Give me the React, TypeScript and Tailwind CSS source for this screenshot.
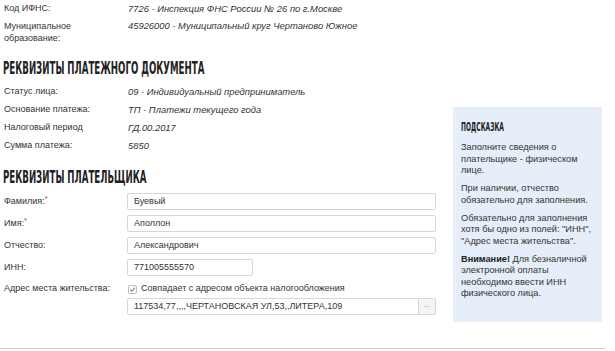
import React from 'react';

const head = "inline-block origin-left whitespace-nowrap font-['DejaVu_Sans_Condensed','DejaVu_Sans',sans-serif] font-bold uppercase text-[#222]";

const InfoRow: React.FC<{ label: React.ReactNode; value: string; className?: string }> = ({ label, value, className }) => (
  <div className={`flex ${className ?? 'h-[18px] items-center'}`}>
    <div className="w-[124px] shrink-0">{label}</div>
    <div className="italic whitespace-nowrap text-[9.4px]">{value}</div>
  </div>
);

const Field: React.FC<{ label: React.ReactNode; value: string; short?: boolean }> = ({ label, value, short }) => (
  <div className="flex items-center h-[17px] mb-[5px]">
    <div className="w-[123px] shrink-0">{label}</div>
    <div
      className={`h-[17px] ${short ? 'w-[126px]' : 'w-[309px]'} border border-[#d6d6d6] rounded-[2px] px-[6px] flex items-center text-[#333]`}
    >
      {value}
    </div>
  </div>
);

const Req: React.FC<{ children: string }> = ({ children }) => (
  <span>
    {children}:<span className="text-[#e03030] align-top text-[8px] leading-none">*</span>
  </span>
);

export default function App() {
  return (
    <div className="w-[615px] h-[351px] bg-white overflow-hidden font-['Liberation_Sans',Arial,sans-serif] text-[9px] text-[#333]">
      <div className="flex h-[348px]">
        <div className="w-[448px] shrink-0 pl-[4px]">
          <InfoRow label="Код ИФНС:" value="7726 - Инспекция ФНС России № 26 по г.Москве" />
          <InfoRow
            className="mt-[2px] leading-[12px] items-start"
            label={<>Муниципальное<br />образование:</>}
            value="45926000 - Муниципальный круг Чертаново Южное"
          />

          <h2 className="h-[20px] mt-[14px] -ml-[1px]">
            <span className={`${head} text-[17px] leading-[20px] scale-x-[0.565]`}>Реквизиты платежного документа</span>
          </h2>

          <div className="mt-[5px]">
            <InfoRow label="Статус лица:" value="09 - Индивидуальный предприниматель" />
            <InfoRow label="Основание платежа:" value="ТП - Платежи текущего года" />
            <InfoRow label="Налоговый период" value="ГД.00.2017" />
            <InfoRow label="Сумма платежа:" value="5850" />
          </div>

          <h2 className="h-[20px] mt-[12px] -ml-[1px]">
            <span className={`${head} text-[17px] leading-[20px] scale-x-[0.565]`}>Реквизиты плательщика</span>
          </h2>

          <div className="mt-[6px]">
            <Field label={<Req>Фамилия</Req>} value="Буевый" />
            <Field label={<Req>Имя</Req>} value="Аполлон" />
            <Field label="Отчество:" value="Александрович" />
            <Field label="ИНН:" value="771005555570" short />
            <div className="flex items-center h-[16px]">
              <div className="w-[124px] shrink-0 whitespace-nowrap">Адрес места жительства:</div>
              <div className="flex items-center gap-[4px]">
                <span className="w-[9px] h-[9px] border border-[#bbb] rounded-[2px] flex items-center justify-center bg-white">
                  <svg width="7" height="7" viewBox="0 0 8 8">
                    <path d="M1.2 4.2 L3.2 6 L6.8 1.8" fill="none" stroke="#5a7ea8" strokeWidth="1.2" />
                  </svg>
                </span>
                <span className="whitespace-nowrap">Совпадает с адресом объекта налогообложения</span>
              </div>
            </div>
            <div className="flex mt-[1px] ml-[123px] h-[17px]">
              <div className="w-[292px] border border-[#d6d6d6] rounded-l-[2px] px-[6px] flex items-center">
                117534,77,,,,ЧЕРТАНОВСКАЯ УЛ,53,,ЛИТЕРА,109
              </div>
              <div className="w-[17px] border border-l-0 border-[#d6d6d6] rounded-r-[2px] bg-[#f4f4f4] flex items-center justify-center text-[#6f8fb5] text-[8px] leading-none pb-[3px]">
                ...
              </div>
            </div>
          </div>
        </div>

        <div className="mt-[107px] ml-[5px] w-[149px] h-[215px] bg-[#e6eef9] px-[8px] pt-[13px]">
          <h3 className="h-[14px]">
            <span className={`${head} text-[11.5px] leading-[14px] scale-x-[0.575]`}>Подсказка</span>
          </h3>
          <div className="mt-[8px] text-[9.2px] leading-[11.5px] text-[#333]">
            <p className="mb-[6.5px]">Заполните сведения о плательщике - физическом лице.</p>
            <p className="mb-[6.5px]">При наличии, отчество обязательно для заполнения.</p>
            <p className="mb-[6.5px]">Обязательно для заполнения хотя бы одно из полей: "ИНН", "Адрес места жительства".</p>
            <p>
              <b className="font-bold text-[#222]">Внимание!</b> Для безналичной электронной оплаты необходимо ввести ИНН физического лица.
            </p>
          </div>
        </div>
      </div>
      <div className="w-[605px] h-px bg-[#cfcfcf]" />
    </div>
  );
}
